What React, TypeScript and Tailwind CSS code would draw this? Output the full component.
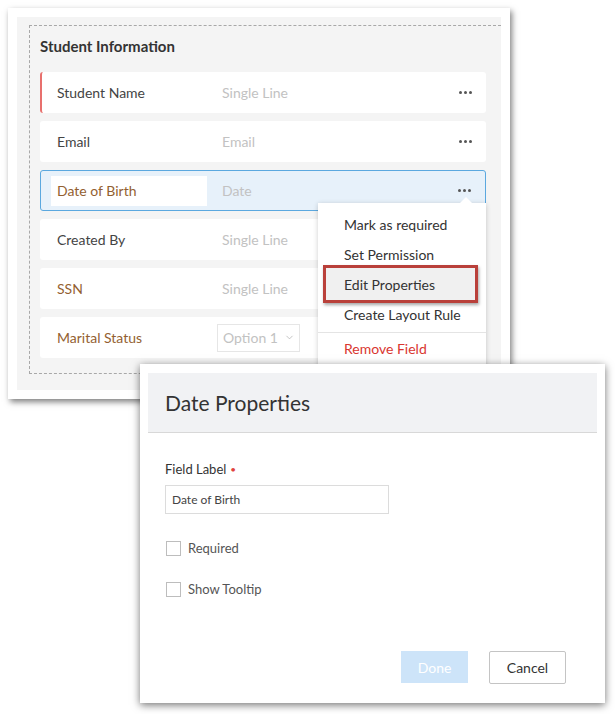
import { ChevronDown } from "lucide-react";

const rows = [
  { label: "Student Name", type: "Single Line", kind: "required" },
  { label: "Email", type: "Email", kind: "plain" },
  { label: "Date of Birth", type: "Date", kind: "active" },
  { label: "Created By", type: "Single Line", kind: "plain" },
  { label: "SSN", type: "Single Line", kind: "custom" },
  { label: "Marital Status", type: "Option 1", kind: "select" },
];

function Dots() {
  return (
    <div className="flex gap-[2px]">
      <span className="w-[3px] h-[3px] rounded-full bg-[#555]" />
      <span className="w-[3px] h-[3px] rounded-full bg-[#555]" />
      <span className="w-[3px] h-[3px] rounded-full bg-[#555]" />
    </div>
  );
}

function FieldRow({ label, type, kind }: { label: string; type: string; kind: string }) {
  const brown = kind === "active" || kind === "custom" || kind === "select";
  const base = "h-[41px] rounded-[3px] flex items-center pr-[14px] text-[14px]";
  const box =
    kind === "active"
      ? "bg-[#e7f1fa] border border-[#5ba8df] pl-[10px]"
      : kind === "required"
        ? "bg-white border-l-2 border-[#e8706d] pl-[15px]"
        : "bg-white pl-[17px]";

  return (
    <div className={`${base} ${box}`}>
      {kind === "active" ? (
        <div className="w-[156px] h-[30px] bg-white flex items-center pl-[6px] mr-[15px] text-[#935f31]">
          {label}
        </div>
      ) : (
        <div className={`${kind === "select" ? "w-[160px]" : "w-[165px]"} ${brown ? "text-[#935f31]" : "text-[#444]"}`}>
          {label}
        </div>
      )}
      <div className="flex-1">
        {kind === "select" ? (
          <div className="w-[83px] h-[28px] border border-[#e6e6e6] flex items-center pl-[5px] gap-[6px] text-[#c2c2c2]">
            {type}
            <ChevronDown size={11} strokeWidth={1.5} className="text-[#aaa]" />
          </div>
        ) : (
          <span className="text-[#c2c2c2]">{type}</span>
        )}
      </div>
      {kind !== "select" && <Dots />}
    </div>
  );
}

export default function App() {
  return (
    <div
      className="relative w-[615px] h-[714px] bg-white overflow-hidden"
      style={{ fontFamily: "Lato, 'Open Sans', sans-serif" }}
    >
      {/* layout editor card */}
      <div className="ml-[8px] mt-[8px] w-[502px] h-[391px] bg-white p-[9px] shadow-[2px_3px_6px_rgba(0,0,0,0.5)]">
        <div className="h-full bg-[#f4f4f4] pt-[8px] pl-[12px] overflow-hidden">
          <div className="h-[349px] border-t border-l border-b border-dashed border-[#a8a8a8] pl-[10px] pr-[15px] pt-[11px]">
            <div className="text-[15px] font-bold text-[#333] leading-[18px] h-[35px]">Student Information</div>
            <div className="flex flex-col gap-[8px]">
              {rows.map((r) => (
                <FieldRow key={r.label} {...r} />
              ))}
            </div>
          </div>
        </div>
      </div>

      {/* field menu */}
      <div className="absolute left-[318px] top-[203px] w-[168px] h-[170px] bg-white shadow-[0_1px_5px_rgba(0,0,0,0.2)] pt-[6px] text-[14px] text-[#333]">
        <div className="absolute -top-[6px] left-[142px] w-0 h-0 border-l-[6px] border-r-[6px] border-b-[6px] border-l-transparent border-r-transparent border-b-white" />
        <div className="h-[30px] flex items-center pl-[26px]">Mark as required</div>
        <div className="h-[30px] flex items-center pl-[26px]">Set Permission</div>
        <div className="relative h-[30px] flex items-center pl-[26px]">
          <div className="absolute left-[5px] -top-[4px] w-[155px] h-[38px] border-[3px] border-[#b9403a] bg-[#f0f0f0] shadow-[1px_2px_3px_rgba(0,0,0,0.35)]" />
          <span className="relative">Edit Properties</span>
        </div>
        <div className="h-[30px] flex items-center pl-[26px]">Create Layout Rule</div>
        <div className="border-t border-[#e4e4e4] mt-[3px] h-[32px] flex items-center pl-[26px] text-[#d9362f]">
          Remove Field
        </div>
      </div>

      {/* properties dialog */}
      <div className="absolute left-[140px] top-[364px] w-[465px] h-[339px] bg-white px-[8px] pt-[9px] shadow-[0_2px_8px_rgba(0,0,0,0.55)] flex flex-col">
        <div className="h-[60px] bg-[#f1f2f4] border-b border-[#d8d8d8] flex items-center pl-[17px] text-[21px] text-[#333]">
          Date Properties
        </div>
        <div className="pl-[17px] pt-[28px]">
          <div className="text-[13px] text-[#333] leading-[16px] flex items-center gap-[4px]">
            Field Label <span className="text-[#e0433d] text-[10px]">•</span>
          </div>
          <div className="mt-[8px] w-[224px] h-[29px] border border-[#dcdcdc] flex items-center pl-[6px] text-[12px] text-[#444]">
            Date of Birth
          </div>
          <div className="mt-[25px] flex items-center gap-[7px] text-[13px] text-[#555]">
            <span className="w-[15px] h-[15px] border border-[#bdbdbd] bg-white ml-[1px]" />
            Required
          </div>
          <div className="mt-[21px] flex items-center gap-[7px] text-[13px] text-[#555]">
            <span className="w-[15px] h-[15px] border border-[#bdbdbd] bg-white ml-[1px]" />
            Show Tooltip
          </div>
        </div>
        <div className="mt-auto mb-[19px] flex justify-end gap-[21px] pr-[31px]">
          <button className="w-[67px] h-[32px] bg-[#cde4f9] text-white text-[14px]">Done</button>
          <button className="w-[77px] h-[33px] border border-[#c4c4c4] rounded-[2px] bg-white text-[#333] text-[14px]">
            Cancel
          </button>
        </div>
      </div>
    </div>
  );
}
